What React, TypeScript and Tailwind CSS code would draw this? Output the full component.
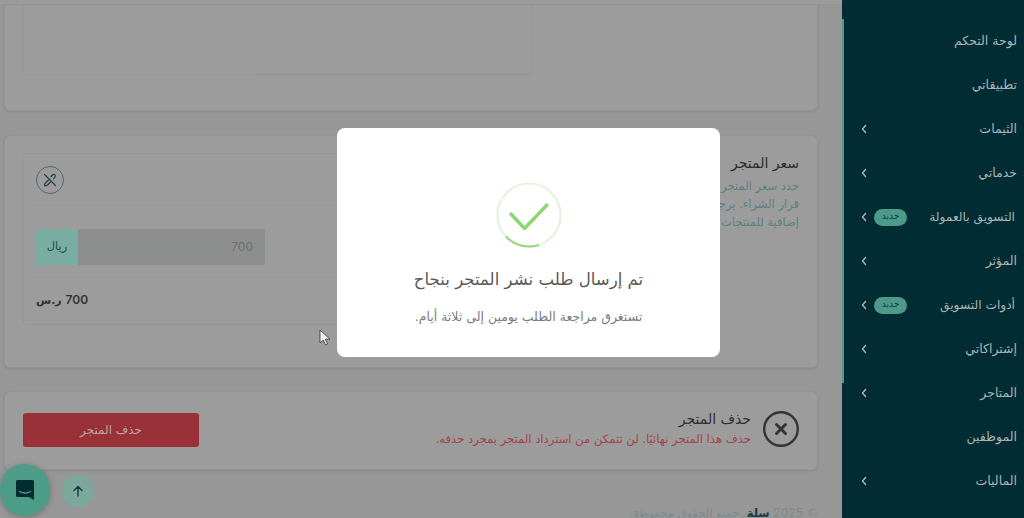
const font = { fontFamily: '"DejaVu Sans", "Noto Sans", sans-serif' };

const items: { label: string; chevron?: boolean; badge?: boolean }[] = [
  { label: "لوحة التحكم" },
  { label: "تطبيقاتي" },
  { label: "الثيمات", chevron: true },
  { label: "خدماتي", chevron: true },
  { label: "التسويق بالعمولة", chevron: true, badge: true },
  { label: "المؤثر", chevron: true },
  { label: "أدوات التسويق", chevron: true, badge: true },
  { label: "إشتراكاتي", chevron: true },
  { label: "المتاجر", chevron: true },
  { label: "الموظفين" },
  { label: "الماليات", chevron: true },
];

function Chevron() {
  return (
    <svg width="8" height="10" viewBox="0 0 8 10" fill="none" stroke="#a9b5b6" strokeWidth="1.4" strokeLinecap="round" strokeLinejoin="round">
      <path d="M5.5 1.5 2.5 5l3 3.5" />
    </svg>
  );
}

function Sidebar() {
  return (
    <aside className="relative h-[518px] w-[182px] shrink-0 overflow-hidden bg-[#012c33] pt-[19px]">
      <div className="absolute top-[19px] right-[180px] h-[364px] w-[2px] bg-[#4e9a89]" />
      {items.map((it) => (
        <div key={it.label} className="flex h-[44px] items-center pr-[7px] pl-[18px] text-[12.5px] text-[#a9b5b6]">
          <span className={it.badge ? "mr-[2px] text-[12.2px]" : ""}>{it.label}</span>
          <span className="mr-auto flex items-center gap-[6px]">
            {it.badge && (
              <span className="flex h-[17px] w-[33px] items-center justify-center rounded-full bg-[#4e9a89] text-[9px] text-[#0b3a3c]">جديد</span>
            )}
            {it.chevron && <Chevron />}
          </span>
        </div>
      ))}
    </aside>
  );
}

function Card({ className, children }: { className: string; children?: React.ReactNode }) {
  return (
    <section className={`rounded-[6px] border border-[#939393] bg-[#9c9c9c] shadow-[0_1px_3px_rgba(0,0,0,0.1)] ${className}`}>
      {children}
    </section>
  );
}

function Main() {
  return (
    <main className="relative h-[518px] flex-1 overflow-hidden bg-[#979797] pr-[24px] pl-[4px]">
      <div className="-mr-[24px] -ml-[4px] h-[5px] border-b border-[#959595] bg-[#9b9b9b]" />
      <Card className="h-[106px] rounded-t-none border-t-0 pb-[36px] pl-[18px]">
        <div className="mr-auto h-[70px] w-[509px] rounded-b-[4px] border border-t-0 border-dotted border-[#929292]" />
      </Card>

      <Card className="mt-[24px] flex h-[233px] justify-between pt-[17px] pr-[18px] pl-[18px]">
        <div>
          <h2 className="-mt-[1px] text-[14px] leading-[22px] text-[#2a2a2a]">سعر المتجر</h2>
          <p className="mt-[3px] text-[11.5px] leading-[18px] whitespace-nowrap text-[#5f7f80]">
            حدد سعر المتجر
            <br />
            قرار الشراء. يرجى
            <br />
            إضافية للمنتجات
          </p>
        </div>
        <div className="h-[172px] w-[509px] rounded-[4px] border border-dotted border-[#929292] px-[12px]">
          <div className="flex h-[52px] items-center justify-end border-b border-dotted border-[#929292]">
            <span className="flex h-[28px] w-[28px] items-center justify-center rounded-full border border-[#4c6c6f]">
              <svg width="16" height="16" viewBox="0 0 16 16" fill="none" stroke="#24444a" strokeWidth="1.2" strokeLinecap="round" strokeLinejoin="round">
                <path d="M2.5 2.5l11 11" />
                <path d="M9 4.5 10.5 3a1.6 1.6 0 0 1 2.4 2.2L11.5 7" />
                <path d="M6.5 8 3 11.5 2.5 14l2.5-.5L8.5 10" />
              </svg>
            </span>
          </div>
          <div className="flex h-[72px] items-start justify-end border-b border-dotted border-[#929292] pt-[23px]">
            <div className="flex h-[36px] w-[229px] overflow-hidden rounded-[3px] bg-[#8d8f8e]">
              <span className="flex flex-1 items-center pr-[12px] font-['Inter'] text-[12px] text-[#6f6f6f]">700</span>
              <span className="flex w-[42px] items-center justify-center bg-[#7aada1] text-[11.5px] text-[#1f4a4c]">ريال</span>
            </div>
          </div>
          <div className="flex h-[44px] items-center justify-end text-[11px] font-bold text-[#333333]">
            <span dir="rtl"><span className="font-['Inter'] text-[12px] font-semibold">700</span> ر.س</span>
          </div>
        </div>
      </Card>

      <Card className="mt-[23px] flex h-[79px] items-center pr-[18px] pl-[18px]">
        <svg width="36" height="36" viewBox="0 0 36 36" fill="none" stroke="#353535" className="mb-[3px] shrink-0">
          <circle cx="18" cy="18" r="16.8" strokeWidth="2.4" />
          <path d="M13.5 13.5l9 9M22.5 13.5l-9 9" strokeWidth="3" strokeLinecap="round" />
        </svg>
        <div className="mr-[12px] mb-[5px]">
          <h2 className="text-[14px] leading-[20px] text-[#2e2e2e]">حذف المتجر</h2>
          <p className="mt-[2px] text-[11.6px] leading-[17px] text-[#a3444b]">حذف هذا المتجر نهائيًا. لن تتمكن من استرداد المتجر بمجرد حذفه.</p>
        </div>
        <button className="mr-auto mb-[2px] flex h-[34px] w-[176px] items-center justify-center rounded-[3px] bg-[#993138] text-[12px] text-[#c4a2a2]">
          حذف المتجر
        </button>
      </Card>

      <p className="mt-[35px] text-[11.5px] leading-[16px] whitespace-nowrap text-[#7c8b8c]">
        © <span className="font-['Inter'] text-[12px]">2025</span> <span className="font-bold text-[#123f44]">سلة</span>. جميع الحقوق محفوظة.
      </p>

      <button className="absolute bottom-[11px] left-[62px] flex h-[32px] w-[32px] items-center justify-center rounded-full bg-[#7aa89d]">
        <svg width="14" height="14" viewBox="0 0 14 14" fill="none" stroke="#0f3a40" strokeWidth="1.4" strokeLinecap="round" strokeLinejoin="round">
          <path d="M7 12V2.5M3 6.5l4-4 4 4" />
        </svg>
      </button>
      <button className="absolute bottom-[2px] left-0 flex h-[52px] w-[50px] items-center justify-center rounded-full bg-[#4d9c88] shadow-[0_1px_6px_rgba(0,0,0,0.25)]">
        <svg width="20" height="22" viewBox="0 0 20 22" fill="#012c33">
          <path d="M2.5 1h15A1.5 1.5 0 0 1 19 2.5V21l-5-3H2.5A1.5 1.5 0 0 1 1 16.5v-14A1.5 1.5 0 0 1 2.5 1Z" />
          <path d="M4.5 12.5c3 2 8 2 11 0" fill="none" stroke="#4d9c88" strokeWidth="1.4" strokeLinecap="round" />
        </svg>
      </button>

      <svg width="14" height="18" viewBox="0 0 14 18" className="absolute top-[329px] left-[319px]">
        <path d="M1 1v13l3.2-3 2.3 5 2-1-2.2-4.800H11Z" fill="#eeeeee" stroke="#333333" strokeWidth="0.8" />
      </svg>

      <div className="absolute top-[128px] left-[337px] flex h-[229px] w-[383px] flex-col items-center rounded-[8px] bg-white pt-[54px]">
        <svg width="66" height="66" viewBox="0 0 66 66" fill="none">
          <circle cx="33" cy="33" r="31.5" stroke="#e4f4dc" strokeWidth="2.2" />
          <path d="M10.5 55A31.5 31.5 0 0 0 42 63.2" stroke="#97d77f" strokeWidth="2.2" strokeLinecap="round" />
          <path d="M15 32l13.500 14.500L51 23" stroke="#8fd573" strokeWidth="3.4" strokeLinecap="round" strokeLinejoin="round" />
        </svg>
        <h1 className="mt-[19px] text-[16.6px] leading-[26px] text-[#595959]">تم إرسال طلب نشر المتجر بنجاح</h1>
        <p className="mt-[15px] text-[12.5px] leading-[18px] text-[#7a7a7a]">تستغرق مراجعة الطلب يومين إلى ثلاثة أيام.</p>
      </div>
    </main>
  );
}

export default function App() {
  return (
    <div dir="rtl" style={font} className="flex h-[518px] w-[1024px] overflow-hidden">
      <Sidebar />
      <Main />
    </div>
  );
}
